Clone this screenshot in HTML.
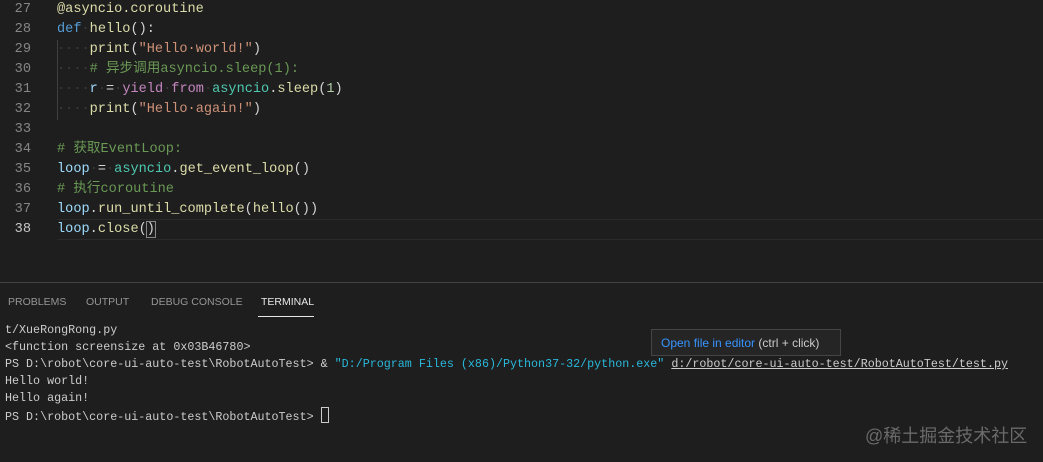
<!DOCTYPE html>
<html><head><meta charset="utf-8"><style>
body{margin:0;width:1043px;height:462px;background:#1e1e1e;overflow:hidden;position:relative;font-family:"Liberation Mono","Noto Sans CJK SC",monospace}
.ln{position:absolute;left:0;width:31px;text-align:right;color:#858585;font-size:13.6px;line-height:20px}
.code{position:absolute;left:57px;font-size:13.6px;line-height:20px;color:#d4d4d4;white-space:pre}
.kw{color:#569cd6}.fn{color:#dcdcaa}.st{color:#ce9178}.cm{color:#6a9955}.v{color:#9cdcfe}.c{color:#c586c0}.m{color:#4ec9b0}.n{color:#b5cea8}.d{color:#3b3b3b}
.tabs{position:absolute;top:296px;font-family:"Liberation Sans",sans-serif;font-size:10.5px;color:#969696}
.term{position:absolute;left:5px;top:322px;font-size:11.7px;line-height:17px;color:#cccccc;white-space:pre}
</style></head><body>
<div style="position:absolute;left:57px;top:219px;width:986px;height:19px;border-top:1px solid #2a2a2a;border-bottom:1px solid #2a2a2a"></div>
<div style="position:absolute;left:57px;top:40px;width:1px;height:80px;background:#404040"></div>
<div class="ln" style="top:0">27<br>28<br>29<br>30<br>31<br>32<br>33<br>34<br>35<br>36<br>37<br><span style="color:#c6c6c6">38</span></div>
<div class="code" style="top:0"><span class="fn">@asyncio.coroutine</span>
<span class="kw">def</span><span class="d">·</span><span class="fn">hello</span>():
<span class="d">····</span><span class="fn">print</span>(<span class="st">"Hello·world!"</span>)
<span class="d">····</span><span class="cm"># 异步调用asyncio.sleep(1):</span>
<span class="d">····</span><span class="v">r</span><span class="d">·</span>=<span class="d">·</span><span class="c">yield</span><span class="d">·</span><span class="c">from</span><span class="d">·</span><span class="m">asyncio</span>.<span class="fn">sleep</span>(<span class="n">1</span>)
<span class="d">····</span><span class="fn">print</span>(<span class="st">"Hello·again!"</span>)

<span class="cm"># 获取EventLoop:</span>
<span class="v">loop</span><span class="d">·</span>=<span class="d">·</span><span class="m">asyncio</span>.<span class="fn">get_event_loop</span>()
<span class="cm"># 执行coroutine</span>
<span class="v">loop</span>.<span class="fn">run_until_complete</span>(<span class="fn">hello</span>())
<span class="v">loop</span>.<span class="fn">close</span>(<span style="outline:1px solid #888">)</span></div>
<div style="position:absolute;left:0;top:282px;width:1043px;height:1px;background:#444"></div>
<div class="tabs" style="left:8px">PROBLEMS</div>
<div class="tabs" style="left:86px">OUTPUT</div>
<div class="tabs" style="left:151px">DEBUG CONSOLE</div>
<div class="tabs" style="left:261px;color:#e7e7e7">TERMINAL</div>
<div style="position:absolute;left:258px;top:316px;width:56px;height:1px;background:#e7e7e7"></div>
<div class="term">t/XueRongRong.py
&lt;function screensize at 0x03B46780&gt;
PS D:\robot\core-ui-auto-test\RobotAutoTest&gt; &amp; <span style="color:#29b8db">"D:/Program Files (x86)/Python37-32/python.exe"</span> <span style="text-decoration:underline">d:/robot/core-ui-auto-test/RobotAutoTest/test.py</span>
Hello world!
Hello again!
PS D:\robot\core-ui-auto-test\RobotAutoTest&gt; <span style="display:inline-block;width:6px;height:14px;border:1px solid #ccc;vertical-align:-3px"></span></div>
<div style="position:absolute;left:651px;top:329px;width:190px;height:27px;background:#252526;border:1px solid #454545;box-sizing:border-box;font-family:'Liberation Sans',sans-serif;font-size:12px;line-height:27px;padding-left:9px;color:#ccc;white-space:nowrap"><span style="color:#3794ff">Open file in editor</span> (ctrl + click)</div>
<div style="position:absolute;left:865px;top:422px;font-family:'Liberation Sans','Noto Sans CJK SC',sans-serif;font-size:18px;color:#6a6a6a">@稀土掘金技术社区</div>
</body></html>
